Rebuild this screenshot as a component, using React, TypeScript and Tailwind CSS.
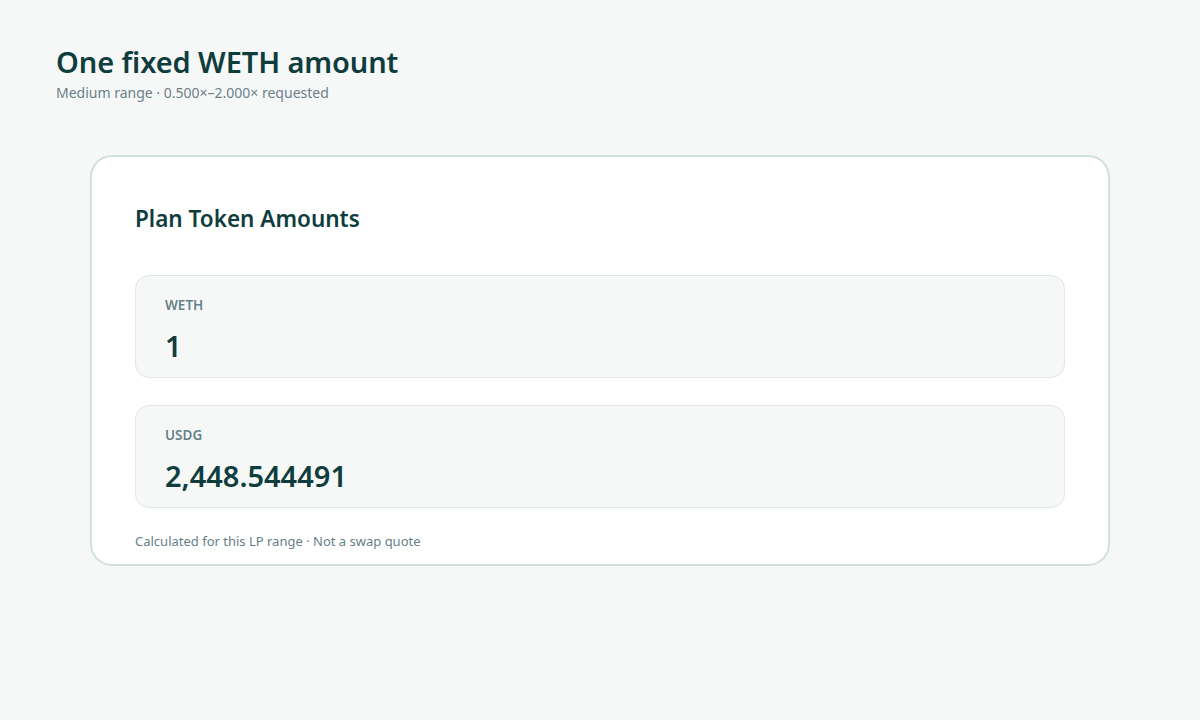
const amounts = [
  { token: 'WETH', value: '1' },
  { token: 'USDG', value: '2,448.544491' },
]

export default function App() {
  return (
    <div className="min-h-screen bg-[#f6f8f8] font-['Noto_Sans',sans-serif] text-[#0f3d3e]">
      <header className="px-14 pt-[44px]">
        <h1 className="text-[29px] font-semibold leading-[36px] tracking-[-0.1px]">One fixed WETH amount</h1>
        <p className="mt-[3px] text-[14px] leading-5 text-[#6b7f88]">
          Medium range · 0.500×–2.000× requested
        </p>
      </header>

      <section className="mx-auto mt-[52px] w-[1020px] rounded-[22px] border-2 border-[#cfe1dc] bg-white px-[43px] pt-[46px] pb-[13px]">
        <h2 className="text-[22.5px] font-semibold leading-8">Plan Token Amounts</h2>
        <div className="mt-[40px] flex flex-col gap-[27px]">
          {amounts.map((a) => (
            <div
              key={a.token}
              className="h-[103px] rounded-[14px] border border-[#dfe7e7] bg-[#f6f8f8] px-[29px] pt-[19px]"
            >
              <div className="text-[13.5px] font-semibold leading-5 text-[#66808a]">{a.token}</div>
              <div className="mt-[13px] text-[29px] font-semibold leading-9">{a.value}</div>
            </div>
          ))}
        </div>
        <p className="mt-[23px] text-[13px] leading-5 text-[#66808a]">
          Calculated for this LP range · Not a swap quote
        </p>
      </section>
    </div>
  )
}
